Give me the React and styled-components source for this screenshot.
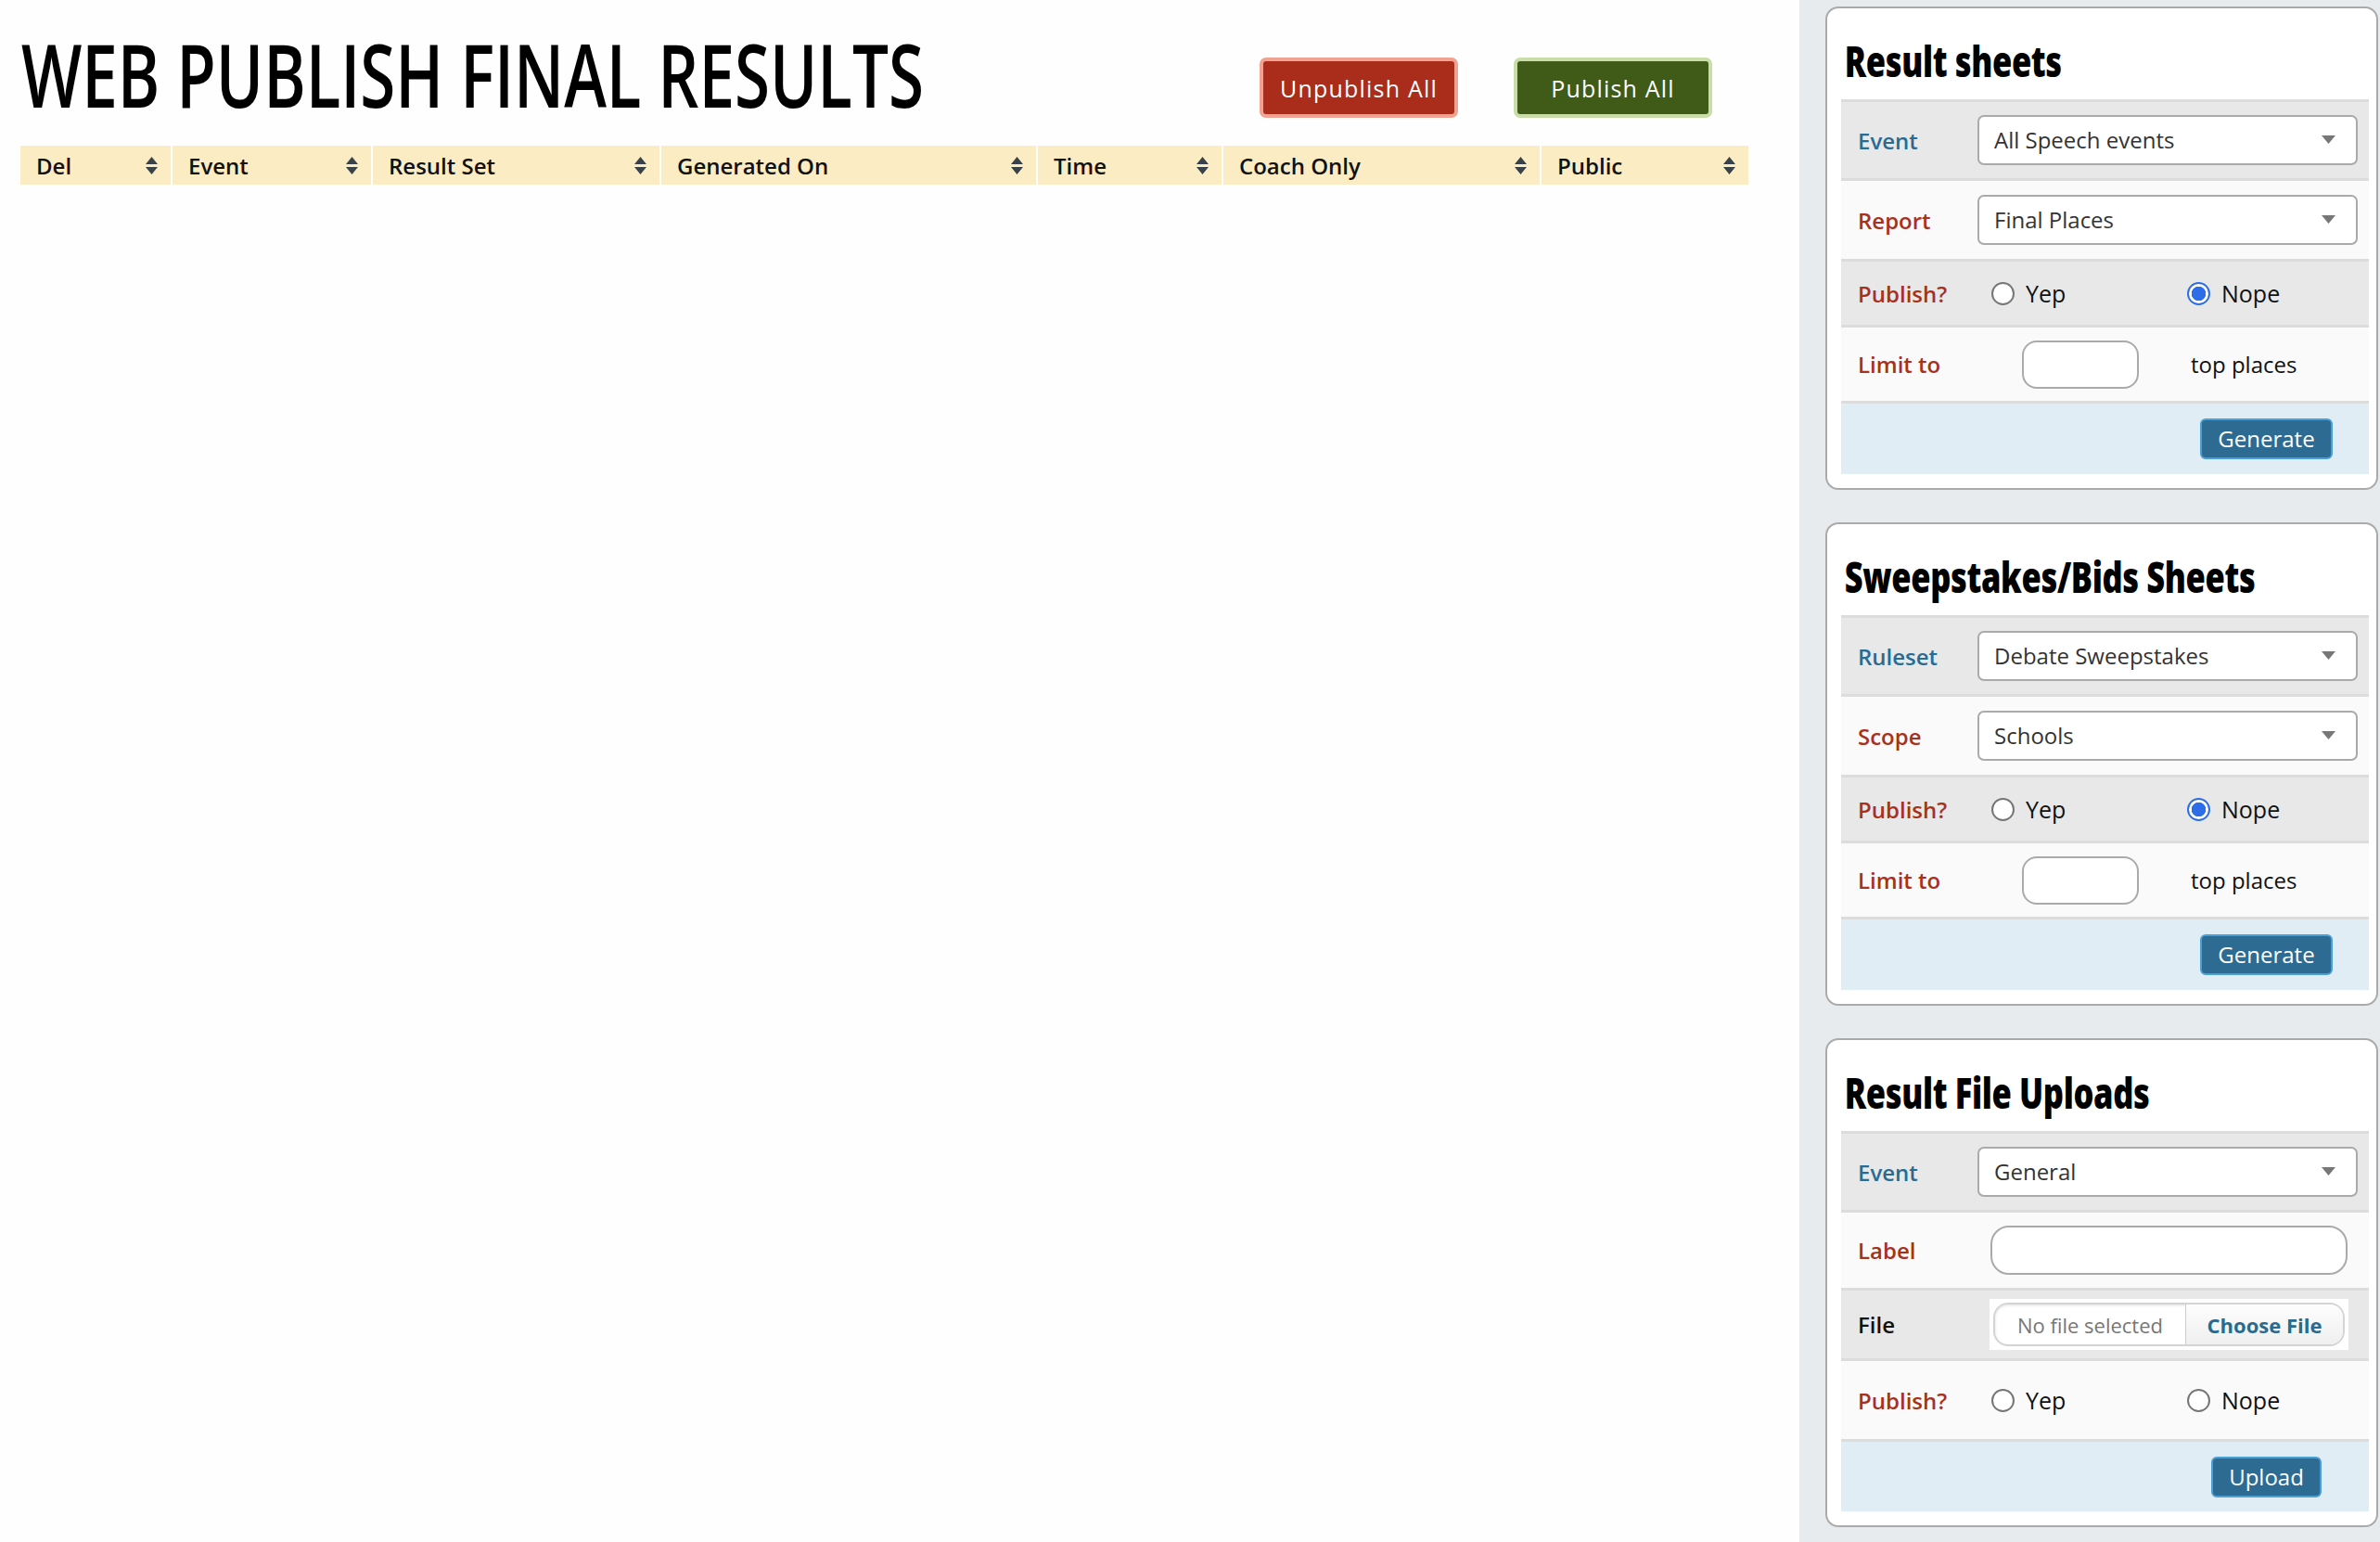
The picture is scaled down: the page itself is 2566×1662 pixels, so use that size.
import React from 'react';
import styled, { createGlobalStyle } from 'styled-components';

const GlobalStyle = createGlobalStyle`
  html, body { margin: 0; padding: 0; background: #fefefe; }
  body { font-family: "Open Sans", "Liberation Sans", sans-serif; color: #111; }
  * { box-sizing: border-box; }
`;

const Page = styled.div`
  display: flex;
  width: 2566px;
  min-height: 1662px;
`;

const Main = styled.main`
  flex: 1;
  padding: 0 55px 0 22px;
  background: #fefefe;
`;

const TopBar = styled.div`
  display: flex;
  align-items: flex-start;
  height: 157px;
`;

const PageTitle = styled.h1`
  margin: 33px 0 0 1px;
  font-family: "Open Sans", sans-serif;
  font-weight: 600;
  font-size: 94px;
  line-height: 94px;
  color: #000;
  white-space: nowrap;
  transform: scaleX(0.735);
  transform-origin: left center;
`;

const ButtonGroup = styled.div`
  display: flex;
  gap: 60px;
  margin: 62px 39px 0 auto;
`;

const ActionButton = styled.button`
  width: 214px;
  height: 65px;
  border: 4px solid ${(p) => p.$ring};
  background: ${(p) => p.$bg};
  color: #fff;
  border-radius: 7px;
  font-family: "Open Sans", sans-serif;
  font-size: 25px;
  letter-spacing: 1.2px;
  padding: 0;
`;

const HeaderRow = styled.div`
  display: grid;
  grid-template-columns: 162px 214px 309px 404px 198px 341px 1fr;
  column-gap: 2px;
  height: 42px;
`;

const HeaderCell = styled.div`
  background: #fcecc4;
  display: flex;
  align-items: center;
  justify-content: space-between;
  padding: 0 14px 0 17px;
  font-weight: 600;
  font-size: 24px;
  color: #111;
`;

const Sidebar = styled.aside`
  flex: 0 0 626px;
  width: 626px;
  background: #e7ebee;
  padding: 7px 2px 8px 28px;
  display: flex;
  flex-direction: column;
  gap: 35px;
`;

const Card = styled.section`
  flex: none;
  background: #fff;
  border: 2px solid #aaa;
  border-radius: 14px;
  padding: 0 8px 15px 15px;
`;

const CardTitle = styled.h2`
  margin: 0;
  height: 98px;
  padding: 33px 0 0 5px;
  font-family: "Open Sans", sans-serif;
  font-weight: 800;
  font-size: 46px;
  line-height: 46px;
  letter-spacing: -0.5px;
  color: #000;
  white-space: nowrap;
  transform: scaleX(0.75);
  transform-origin: left center;
`;

const FormRows = styled.div`
  border-top: 3px solid #dcdcdc;
`;

const Row = styled.div`
  display: grid;
  grid-template-columns: 147px 1fr;
  align-items: center;
  min-height: ${(p) => p.$h}px;
  background: ${(p) => (p.$shade ? '#e8e8e8' : '#fafafa')};
  border-bottom: 3px solid #dcdcdc;
`;

const FieldLabel = styled.span`
  padding-left: 18px;
  font-weight: 600;
  font-size: 24px;
  color: ${(p) => p.$color};
`;

const SelectBox = styled.div`
  display: flex;
  align-items: center;
  justify-content: space-between;
  height: 54px;
  margin-right: 12px;
  border: 2px solid #aaa;
  border-radius: 7px;
  background: #fff;
  padding: 0 22px 2px 16px;
  font-size: 24px;
  color: #333;
`;

const RadioGroup = styled.div`
  display: grid;
  grid-template-columns: 1fr 1fr;
`;

const RadioOption = styled.label`
  display: flex;
  align-items: center;
  gap: 12px;
  padding-left: 15px;
  font-size: 25px;
  color: #111;
`;

const RadioDot = styled.span`
  width: 25px;
  height: 25px;
  border-radius: 50%;
  border: 2px solid ${(p) => (p.$on ? '#2d6ee8' : '#767676')};
  background: ${(p) =>
    p.$on ? 'radial-gradient(circle, #2d6ee8 0 7.5px, #fff 8px)' : '#fff'};
`;

const LimitGroup = styled.div`
  display: grid;
  grid-template-columns: 1fr 1fr;
  align-items: center;
`;

const NumberInput = styled.div`
  justify-self: center;
  margin-left: 10px;
  width: 126px;
  height: 52px;
  border: 2px solid #aaa;
  border-radius: 16px;
  background: #fff;
`;

const Suffix = styled.span`
  padding-left: 19px;
  font-size: 24px;
  color: #111;
`;

const TextInput = styled.div`
  width: 385px;
  height: 53px;
  margin-left: 14px;
  border: 2px solid #aaa;
  border-radius: 20px;
  background: #fff;
`;

const FileBox = styled.div`
  width: 387px;
  height: 55px;
  margin-left: 13px;
  padding: 4px;
  background: #fff;
`;

const FilePill = styled.div`
  display: flex;
  height: 47px;
  border: 2px solid #d4d4d4;
  border-radius: 16px;
  overflow: hidden;
  box-shadow: inset 0 1px 3px rgba(0, 0, 0, 0.12);
`;

const FileName = styled.span`
  flex: 0 0 206px;
  display: flex;
  align-items: center;
  justify-content: center;
  font-size: 22px;
  color: #777;
  border-right: 1px solid #ccc;
`;

const FileButton = styled.span`
  flex: 1;
  display: flex;
  align-items: center;
  justify-content: center;
  font-size: 22px;
  font-weight: 700;
  color: #2a6a8f;
  background: linear-gradient(#fdfdfd, #efefef);
`;

const Footer = styled.div`
  display: flex;
  justify-content: flex-end;
  align-items: center;
  min-height: ${(p) => p.$h}px;
  background: #e1edf5;
`;

const ButtonCell = styled.div`
  width: 221px;
  display: flex;
  justify-content: center;
`;

const SubmitButton = styled.button`
  height: 44px;
  padding: 0 17px;
  background: #2e6b92;
  border: 2px solid #4b9fd5;
  border-radius: 6px;
  color: #fff;
  font-family: "Open Sans", sans-serif;
  font-size: 24px;
  line-height: 1;
`;

const SortIcon = () => (
  <svg width="13" height="19" viewBox="0 0 13 19" aria-hidden="true">
    <path d="M6.5 0 L13 8 L0 8 Z" fill="#3a4249" />
    <path d="M0 11 L13 11 L6.5 19 Z" fill="#3a4249" />
  </svg>
);

const Caret = () => (
  <svg width="15" height="9" viewBox="0 0 15 9" aria-hidden="true">
    <path d="M0 0 L15 0 L7.5 9 Z" fill="#777" />
  </svg>
);

const BLUE = '#2a6b93';
const RED = '#a8311c';

const columns = ['Del', 'Event', 'Result Set', 'Generated On', 'Time', 'Coach Only', 'Public'];

const Select = ({ value }) => (
  <SelectBox>
    <span>{value}</span>
    <Caret />
  </SelectBox>
);

const Radios = ({ checked }) => (
  <RadioGroup>
    <RadioOption>
      <RadioDot $on={checked === 'yep'} />
      Yep
    </RadioOption>
    <RadioOption>
      <RadioDot $on={checked === 'nope'} />
      Nope
    </RadioOption>
  </RadioGroup>
);

const SheetCard = ({ title, first, second }) => (
  <Card>
    <CardTitle>{title}</CardTitle>
    <FormRows>
      <Row $shade $h={85}>
        <FieldLabel $color={BLUE}>{first.label}</FieldLabel>
        <Select value={first.value} />
      </Row>
      <Row $h={87}>
        <FieldLabel $color={RED}>{second.label}</FieldLabel>
        <Select value={second.value} />
      </Row>
      <Row $shade $h={71}>
        <FieldLabel $color={RED}>Publish?</FieldLabel>
        <Radios checked="nope" />
      </Row>
      <Row $h={82}>
        <FieldLabel $color={RED}>Limit to</FieldLabel>
        <LimitGroup>
          <NumberInput />
          <Suffix>top places</Suffix>
        </LimitGroup>
      </Row>
    </FormRows>
    <Footer $h={76}>
      <ButtonCell>
        <SubmitButton>Generate</SubmitButton>
      </ButtonCell>
    </Footer>
  </Card>
);

export default function App() {
  return (
    <>
      <GlobalStyle />
      <Page>
        <Main>
          <TopBar>
            <PageTitle>WEB PUBLISH FINAL RESULTS</PageTitle>
            <ButtonGroup>
              <ActionButton $bg="#a92d1a" $ring="#f0a293">Unpublish All</ActionButton>
              <ActionButton $bg="#3f5b17" $ring="#c9dda8">Publish All</ActionButton>
            </ButtonGroup>
          </TopBar>
          <HeaderRow>
            {columns.map((c) => (
              <HeaderCell key={c}>
                <span>{c}</span>
                <SortIcon />
              </HeaderCell>
            ))}
          </HeaderRow>
        </Main>
        <Sidebar>
          <SheetCard
            title="Result sheets"
            first={{ label: 'Event', value: 'All Speech events' }}
            second={{ label: 'Report', value: 'Final Places' }}
          />
          <SheetCard
            title="Sweepstakes/Bids Sheets"
            first={{ label: 'Ruleset', value: 'Debate Sweepstakes' }}
            second={{ label: 'Scope', value: 'Schools' }}
          />
          <Card>
            <CardTitle>Result File Uploads</CardTitle>
            <FormRows>
              <Row $shade $h={85}>
                <FieldLabel $color={BLUE}>Event</FieldLabel>
                <Select value="General" />
              </Row>
              <Row $h={84}>
                <FieldLabel $color={RED}>Label</FieldLabel>
                <TextInput />
              </Row>
              <Row $shade $h={76}>
                <FieldLabel $color="#111">File</FieldLabel>
                <FileBox>
                  <FilePill>
                    <FileName>No file selected</FileName>
                    <FileButton>Choose File</FileButton>
                  </FilePill>
                </FileBox>
              </Row>
              <Row $h={87}>
                <FieldLabel $color={RED}>Publish?</FieldLabel>
                <Radios checked="" />
              </Row>
            </FormRows>
            <Footer $h={75}>
              <ButtonCell>
                <SubmitButton>Upload</SubmitButton>
              </ButtonCell>
            </Footer>
          </Card>
        </Sidebar>
      </Page>
    </>
  );
}
